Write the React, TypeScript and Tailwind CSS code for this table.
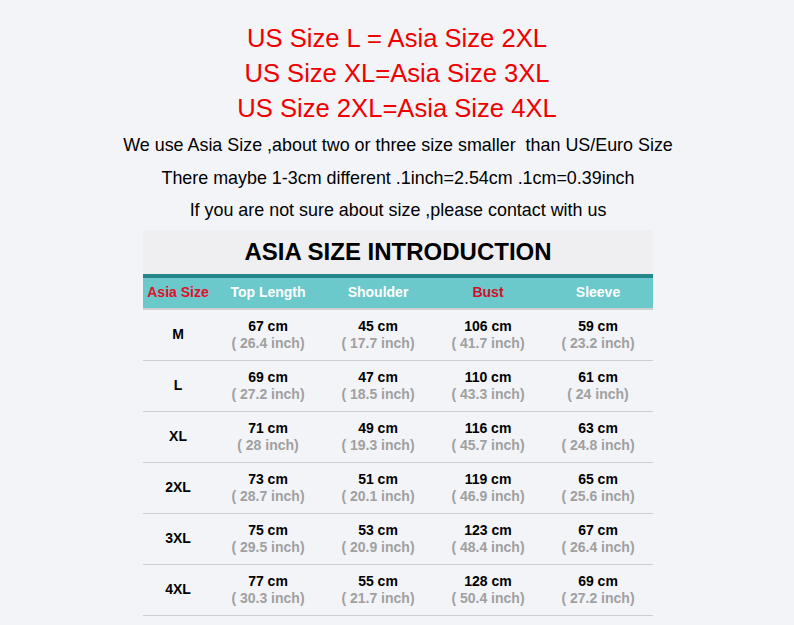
import React from "react";

const rows = [
  ["M", "67", "26.4", "45", "17.7", "106", "41.7", "59", "23.2"],
  ["L", "69", "27.2", "47", "18.5", "110", "43.3", "61", "24"],
  ["XL", "71", "28", "49", "19.3", "116", "45.7", "63", "24.8"],
  ["2XL", "73", "28.7", "51", "20.1", "119", "46.9", "65", "25.6"],
  ["3XL", "75", "29.5", "53", "20.9", "123", "48.4", "67", "26.4"],
  ["4XL", "77", "30.3", "55", "21.7", "128", "50.4", "69", "27.2"],
];

function Cell({ cm, inch }: { cm: string; inch: string }) {
  return (
    <div className="w-[110px] flex flex-col items-center justify-center leading-[17px] font-bold text-[14px]">
      <span className="text-black">{cm} cm</span>
      <span className="text-[#a0a0a0]">( {inch} inch)</span>
    </div>
  );
}

export default function App() {
  return (
    <div
      className="w-[794px] h-[625px] bg-[#f3f4f8] flex flex-col items-center overflow-hidden"
      style={{ fontFamily: '"Liberation Sans", Arial, sans-serif' }}
    >
      <div className="pt-[21px] flex flex-col items-center text-[#f00000] text-[25.6px] leading-[35px]">
        <div>US Size L = Asia Size 2XL</div>
        <div>US Size XL=Asia Size 3XL</div>
        <div>US Size 2XL=Asia Size 4XL</div>
      </div>
      <div className="flex flex-col items-center text-black text-[17.9px] leading-[32.5px] mt-[3px] ml-[2px]">
        <div>We use Asia Size ,about two or three size smaller&nbsp; than US/Euro Size</div>
        <div>There maybe 1-3cm different .1inch=2.54cm .1cm=0.39inch</div>
        <div>If you are not sure about size ,please contact with us</div>
      </div>
      <div className="w-[510px] mt-[3px] ml-[2px] flex flex-col">
        <div className="h-[44px] bg-[#efeff1] flex items-center justify-center text-[24px] font-bold text-black">
          ASIA SIZE INTRODUCTION
        </div>
        <div className="h-[4px] bg-[#26868a]" />
        <div className="h-[30px] bg-[#6bc8cb] flex items-center text-[14px] font-bold text-white">
          <div className="w-[70px] text-center text-[#e0102a]">Asia Size</div>
          <div className="w-[110px] text-center">Top Length</div>
          <div className="w-[110px] text-center">Shoulder</div>
          <div className="w-[110px] text-center text-[#d0102a]">Bust</div>
          <div className="w-[110px] text-center">Sleeve</div>
        </div>
        <div className="h-[2px] bg-[#d0d0d2]" />
        {rows.map((r) => (
          <div key={r[0]} className="h-[51px] flex border-b border-[#cfcfd1]">
            <div className="w-[70px] flex items-center justify-center text-[14px] font-bold text-black">
              {r[0]}
            </div>
            <Cell cm={r[1]} inch={r[2]} />
            <Cell cm={r[3]} inch={r[4]} />
            <Cell cm={r[5]} inch={r[6]} />
            <Cell cm={r[7]} inch={r[8]} />
          </div>
        ))}
      </div>
    </div>
  );
}
